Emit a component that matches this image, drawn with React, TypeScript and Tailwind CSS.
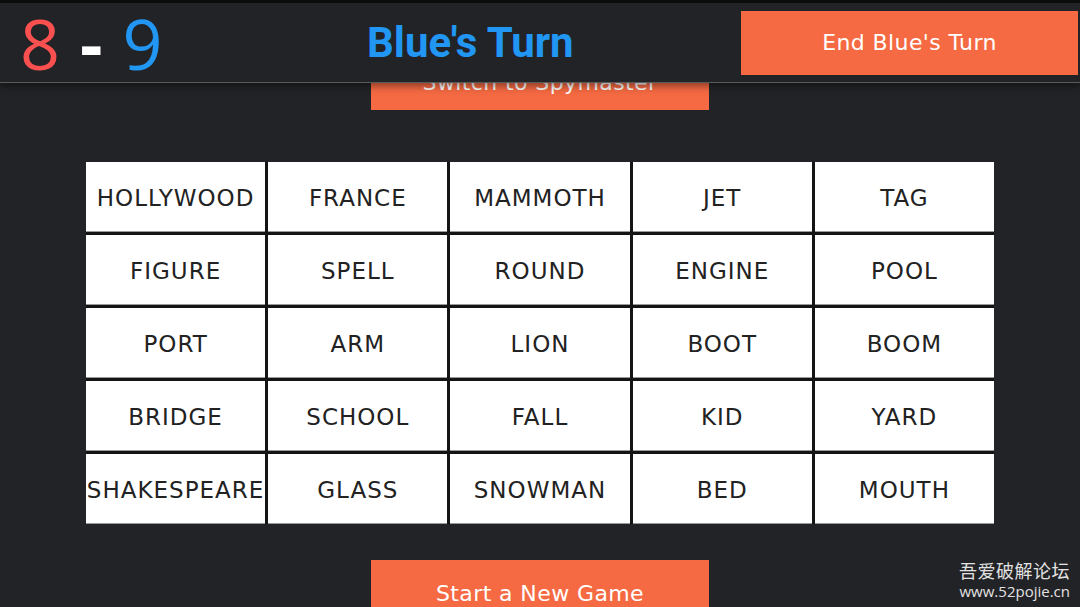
import React from "react";

const words = [
  "HOLLYWOOD", "FRANCE", "MAMMOTH", "JET", "TAG",
  "FIGURE", "SPELL", "ROUND", "ENGINE", "POOL",
  "PORT", "ARM", "LION", "BOOT", "BOOM",
  "BRIDGE", "SCHOOL", "FALL", "KID", "YARD",
  "SHAKESPEARE", "GLASS", "SNOWMAN", "BED", "MOUTH",
];

export default function App() {
  return (
    <div
      className="relative w-[1080px] h-[607px] overflow-hidden bg-[#222326] flex flex-col"
      style={{ fontFamily: '"DejaVu Sans", "Open Sans", sans-serif' }}
    >
      <header className="relative z-10 h-[83px] shrink-0 bg-[#222326] border-t-[3px] border-t-[#0c0c0d] border-b border-b-[#5a5b5d] shadow-[0_3px_8px_rgba(0,0,0,0.45)] flex items-center">
        <div
          className="w-[367px] pl-[20px] flex items-center"
          style={{ fontFamily: '"Open Sans", sans-serif' }}
        >
          <span className="text-[70px] leading-[72px] text-[#fb5050]">8</span>
          <span className="text-[70px] leading-[72px] text-white mx-[20px] font-bold">-</span>
          <span className="text-[70px] leading-[72px] text-[#2196f3]">9</span>
        </div>
        <div
          className="text-[42px] font-bold text-[#2196f3] leading-none"
          style={{ fontFamily: 'Roboto, "Noto Sans", sans-serif' }}
        >
          Blue's Turn
        </div>
        <button className="ml-auto mr-[2px] w-[337px] h-[64px] bg-[#f56a42] text-white text-[22px] tracking-[0.4px] flex items-center justify-center">
          End Blue's Turn
        </button>
      </header>

      <div className="flex flex-col items-center">
        <button className="-mt-[39px] w-[338px] h-[66px] pt-[10px] bg-[#f56a42] text-white text-[22px] tracking-[0.4px] flex items-center justify-center">
          Switch to Spymaster
        </button>

        <div className="mt-[52px] grid grid-cols-5 gap-[3px] bg-[#141414] w-[908px]">
          {words.map((w) => (
            <div
              key={w}
              className="h-[70px] pt-[3px] bg-white flex items-center justify-center text-[23px] tracking-[1px] text-[#222] shadow-[inset_0_-1px_0_#9a9a9a] whitespace-nowrap overflow-hidden"
            >
              {w}
            </div>
          ))}
        </div>

        <button className="mt-[36px] w-[338px] h-[66px] bg-[#f56a42] text-white text-[22px] tracking-[0.4px] flex items-center justify-center">
          Start a New Game
        </button>
      </div>

      <div className="absolute right-[10px] bottom-[7px] flex flex-col items-end gap-[3px] text-[#e2e2e2]">
        <span
          className="text-[18px] leading-[20px] tracking-[0.5px]"
          style={{ fontFamily: '"Noto Sans CJK SC", sans-serif' }}
        >
          吾爱破解论坛
        </span>
        <span
          className="text-[15px] leading-[17px]"
          style={{ fontFamily: '"Open Sans", sans-serif' }}
        >
          www.52pojie.cn
        </span>
      </div>
    </div>
  );
}
